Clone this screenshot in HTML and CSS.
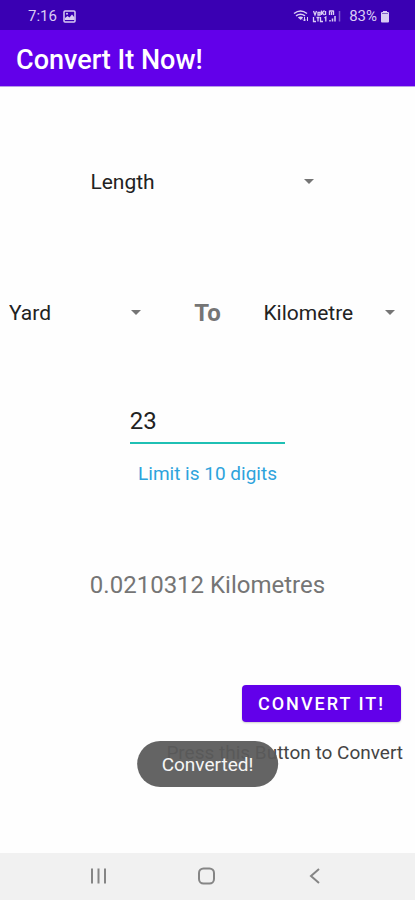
FILE: index.html
```html
<!DOCTYPE html>
<html lang="en">
<head>
<meta charset="utf-8">
<meta name="viewport" content="width=device-width, initial-scale=1">
<title>Convert It Now!</title>
<link rel="stylesheet" href="styles.css">
</head>
<body>
<div class="status">
  <span>7:16</span>
  <svg class="status-picture" width="13" height="13" viewBox="0 0 13 13" aria-hidden="true">
    <rect x="1" y="1" width="11" height="11" rx="1" fill="none" stroke="currentColor" stroke-width="1.5"/>
    <path d="M2 10V8l2.500-2 2 1.500L9 4.500l2.500 3V10z" fill="currentColor"/>
    <circle cx="4" cy="3.800" r="1" fill="currentColor"/>
  </svg>
  <svg class="status-signal" width="48" height="14" viewBox="0 0 48 14" fill="none" stroke="currentColor" aria-hidden="true">
    <path d="M1 4.500Q7.500-.5 14 4.500M3 6.800Q7.500 3.500 12 6.800" stroke-width="1.500"/>
    <path d="M4.800 8.500Q7.500 6.500 10.200 8.500L7.800 11z" fill="currentColor" stroke="none"/>
    <path d="M11.500 12V8M10 10.500l1.500 1.500 1.300-1.500M14.500 8v4" stroke-width="1"/>
    <path d="M20.500 2l1.500 4 1.500-4M25 3.500h2v2.500h-2zM28.500 1.500V6M31.500 1.500L29 4l2.500 2M32.500 2v4M20.500 8v4.500h2.500M23.500 8.500h3M25 8.500v4M27.500 8v4.500h2.500M31.500 9l1.300-1v4.500" stroke-width="1.300"/>
    <path d="M36.500 1.500v4.500M38.500 3v3M40.500 1.500V6M36.500 2h4" stroke-width="1.300"/>
    <path d="M37 12.500V11M39.500 12.500V9.500M42 12.500V7" stroke-width="1.500"/>
    <path d="M46.500 12.500V2" stroke-width="1.500" opacity=".45"/>
  </svg>
  <span>83%</span>
  <svg width="10" height="13" viewBox="0 0 10 13" aria-hidden="true">
    <path d="M3 1h4v1h1q1 0 1 1v8.500q0 1-1 1H2q-1 0-1-1V3q0-1 1-1h1z" fill="currentColor"/>
    <path d="M2 3h6v1H2z" fill="#8062c8"/>
  </svg>
</div>
<header class="appbar"><h1>Convert It Now!</h1></header>
<main>
  <div class="spinner spinner-category">
    <select aria-label="Category"><option>Length</option></select>
    <svg width="10" height="6" viewBox="0 0 10 6" aria-hidden="true"><path d="M0 0h10L5 5z" fill="currentColor"/></svg>
  </div>
  <div class="units">
    <div class="spinner">
      <select aria-label="From unit"><option>Yard</option></select>
      <svg width="10" height="6" viewBox="0 0 10 6" aria-hidden="true"><path d="M0 0h10L5 5z" fill="currentColor"/></svg>
    </div>
    <span class="to">To</span>
    <div class="spinner">
      <select aria-label="To unit"><option>Kilometre</option></select>
      <svg width="10" height="6" viewBox="0 0 10 6" aria-hidden="true"><path d="M0 0h10L5 5z" fill="currentColor"/></svg>
    </div>
  </div>
  <div class="amount">
    <input id="amount" type="text" inputmode="decimal" maxlength="10" value="23">
    <label for="amount">Limit is 10 digits</label>
  </div>
  <output class="result" for="amount">0.0210312 Kilometres</output>
  <div class="action">
    <button class="convert" type="button">CONVERT IT!</button>
    <p>Press this Button to Convert</p>
  </div>
  <div class="toast" role="status">Converted!</div>
</main>
<nav class="navbar" aria-label="System">
  <button type="button" aria-label="Recent apps">
    <svg width="18" height="18" viewBox="0 0 18 18" fill="none" stroke="currentColor" stroke-width="2"><path d="M3 1.500v15M9.500 1.500v15M16 1.500v15"/></svg>
  </button>
  <button type="button" aria-label="Home">
    <svg width="18" height="18" viewBox="0 0 18 18" fill="none" stroke="currentColor" stroke-width="2"><rect x="1" y="1.500" width="15" height="15" rx="4.500"/></svg>
  </button>
  <button type="button" aria-label="Back">
    <svg width="18" height="18" viewBox="0 0 18 18" fill="none" stroke="currentColor" stroke-width="2"><path d="M13 2L5 9l8 7"/></svg>
  </button>
</nav>
</body>
</html>
```
FILE: styles.css
```css
* {
  box-sizing: border-box;
}

body {
  display: flex;
  flex-direction: column;
  min-height: 100vh;
  margin: 0;
  background: #fefefe;
  color: #222;
  font-family: Roboto, "Liberation Sans", sans-serif;
  font-size: 21px;
  line-height: 24px;
}

h1,
p {
  margin: 0;
}

.status {
  display: flex;
  align-items: center;
  padding: 4px 25px 2px 28px;
  background: #3a00b3;
  color: #d9cdf3;
  font-size: 15px;
  line-height: 24px;
}

.status svg {
  margin-left: 3px;
}

.status .status-picture {
  margin-left: 6px;
}

.status .status-signal {
  margin-left: auto;
  margin-right: 8px;
}

.appbar {
  padding: 18px 16px 14px;
  background: #6200ea;
  border-bottom: 1px solid #b79be8;
  color: #fff;
}

.appbar h1 {
  font-size: 27px;
  font-weight: 500;
  line-height: 24px;
}

main {
  position: relative;
  display: flex;
  flex: 1;
  flex-direction: column;
  padding: 75px 8px 0 0;
}

.spinner {
  display: grid;
  align-items: center;
}

.spinner select,
.spinner svg {
  grid-area: 1 / 1;
}

.spinner select {
  width: 100%;
  height: 40px;
  padding: 0 32px 0 9px;
  border: 0;
  appearance: none;
  background: transparent;
  color: inherit;
  font: inherit;
}

.spinner svg {
  justify-self: end;
  margin-right: 12px;
  color: #757575;
  pointer-events: none;
}

.spinner-category {
  width: 60%;
  margin: 0 auto;
}

.units {
  display: grid;
  grid-template-columns: 3fr 2fr 3fr;
  align-items: center;
  margin-top: 91px;
}

.to {
  padding-left: 8px;
  color: #757575;
  font-size: 24px;
  font-weight: 700;
  text-align: center;
}

.amount {
  display: flex;
  flex-direction: column;
  align-items: center;
  gap: 18px;
  margin-top: 68px;
  padding-left: 8px;
}

.amount input {
  width: 39%;
  height: 43px;
  padding: 0 0 2px;
  border: 0;
  border-bottom: 2px solid #1fc0b4;
  border-radius: 0;
  outline: 0;
  background: transparent;
  color: #222;
  font: inherit;
  font-size: 24px;
}

.amount label {
  color: #2da3dc;
  font-size: 19px;
}

.result {
  margin-top: 87px;
  padding-left: 8px;
  color: #757575;
  font-size: 24px;
  text-align: center;
}

.action {
  display: flex;
  flex-direction: column;
  align-items: flex-end;
  gap: 19px;
  margin-top: 88px;
  padding-right: 4px;
}

.convert {
  height: 37px;
  margin-right: 2px;
  padding: 0 16px;
  border: 0;
  border-radius: 4px;
  background: #6200ea;
  box-shadow: 0 1px 2px #0003;
  color: #fff;
  font: inherit;
  font-size: 18px;
  font-weight: 500;
  letter-spacing: 2px;
}

.action p {
  color: #444;
  font-size: 19px;
}

.toast {
  position: absolute;
  bottom: 66px;
  left: 50%;
  padding: 12px 25px 10px;
  border-radius: 24px;
  background: #5a5a5af0;
  color: #f5f5f5;
  font-size: 19px;
  transform: translateX(-50%);
}

.navbar {
  display: flex;
  justify-content: center;
  gap: 18%;
  padding: 6px 2px 7px 0;
  background: #f1f1f1;
}

.navbar button {
  display: grid;
  place-items: center;
  width: 34px;
  height: 34px;
  padding: 0;
  border: 0;
  background: transparent;
  color: #858585;
}
```
